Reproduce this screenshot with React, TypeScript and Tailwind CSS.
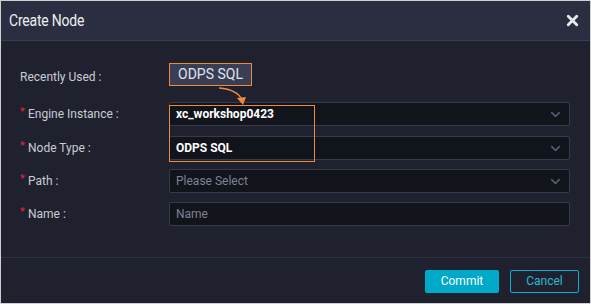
import { ChevronDown, X } from "lucide-react";

const labelCls = "w-[149px] shrink-0 flex items-center text-[12px] text-[#c9ccd6]";

function Req({ text }: { text: string }) {
  return (
    <div className={labelCls}>
      <span className="text-[#e0283a] text-[11px] w-[8px] -mt-[3px]">*</span>
      <span>{text}</span>
    </div>
  );
}

function Select({ value, placeholder }: { value?: string; placeholder?: string }) {
  return (
    <div className="flex-1 h-[24px] flex items-center justify-between rounded-[2px] border border-[#373a4c] bg-[#12141c] pl-[6px] pr-[6px]">
      {value ? (
        <span className="text-[12px] font-bold text-white">{value}</span>
      ) : (
        <span className="text-[12px] text-[#7d8194]">{placeholder}</span>
      )}
      <ChevronDown size={15} strokeWidth={2.5} className="text-[#585c76]" />
    </div>
  );
}

export default function App() {
  return (
    <div
      className="relative w-[591px] h-[304px] border border-[#cfcfcf] bg-[#1f222e] flex flex-col"
      style={{ fontFamily: "Roboto, 'Liberation Sans', sans-serif" }}
    >
      {/* header */}
      <div className="h-[40px] shrink-0 flex items-center justify-between bg-[#2b2e40] border-b border-[#393b54] pl-[8px] pr-[9px]">
        <span className="text-[16px] text-[#eceef4] origin-left scale-x-[0.87] tracking-[-0.2px]">Create Node</span>
        <X size={17} strokeWidth={4} className="text-[#e6e8f0]" />
      </div>

      {/* body */}
      <div className="flex-1 pl-[19px] pr-[20px] pt-[22px]">
        <div className="flex items-center h-[23px]">
          <div className={labelCls + " pt-[4px]"}>Recently Used :</div>
          <div className="h-[23px] px-[8px] flex items-center bg-[#3a3e54] border border-[#f0883e] text-[14px] text-[#e0e3eb]">
            ODPS SQL
          </div>
        </div>
        <div className="flex items-center mt-[16px]">
          <Req text="Engine Instance :" />
          <Select value="xc_workshop0423" />
        </div>
        <div className="flex items-center mt-[10px]">
          <Req text="Node Type :" />
          <Select value="ODPS SQL" />
        </div>
        <div className="flex items-center mt-[9px]">
          <Req text="Path :" />
          <Select placeholder="Please Select" />
        </div>
        <div className="flex items-center mt-[9px]">
          <Req text="Name :" />
          <div className="flex-1 h-[24px] flex items-center rounded-[2px] border border-[#373a4c] bg-[#12141c] pl-[6px]">
            <span className="text-[12px] text-[#7d8194]">Name</span>
          </div>
        </div>
      </div>

      {/* footer */}
      <div className="h-[46px] shrink-0 border-t border-[#2e3144] flex items-center justify-end gap-[11px] pr-[11px] pt-[1px]">
        <button className="w-[74px] h-[23px] rounded-[2px] bg-[#00a9c7] text-white text-[12px]">Commit</button>
        <button className="w-[69px] h-[23px] rounded-[2px] border border-[#0ab0cf] text-[#2cb8d2] text-[12px]">Cancel</button>
      </div>

      {/* annotations */}
      <div className="absolute left-[168px] top-[104px] w-[146px] h-[57px] border-[1.5px] border-[#f0883e]" />
      <svg className="absolute left-[200px] top-[84px]" width="60" height="26" viewBox="0 0 60 26">
        <path d="M18 3 C 30 4, 38 8, 41 15" fill="none" stroke="#f0883e" strokeWidth="1.3" />
        <path d="M36 13 L42 20 L45 12 Z" fill="#f0883e" />
      </svg>
    </div>
  );
}
